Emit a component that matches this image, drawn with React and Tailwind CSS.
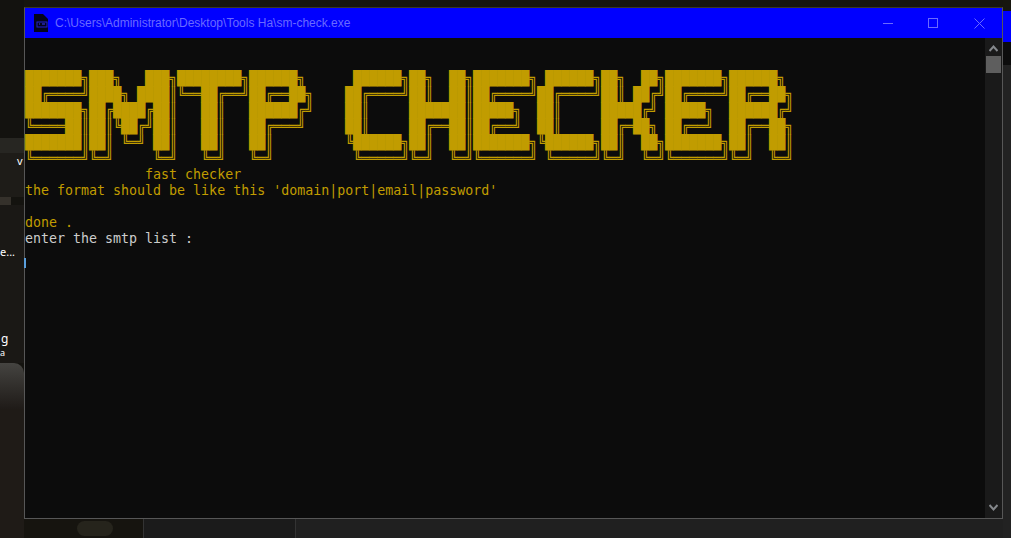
import React from 'react';

const BANNER = [
  '███████╗███╗   ███╗████████╗██████╗      ██████╗██╗  ██╗███████╗ ██████╗██╗  ██╗███████╗██████╗ ',
  '██╔════╝████╗ ████║╚══██╔══╝██╔══██╗    ██╔════╝██║  ██║██╔════╝██╔════╝██║ ██╔╝██╔════╝██╔══██╗',
  '███████╗██╔████╔██║   ██║   ██████╔╝    ██║     ███████║█████╗  ██║     █████╔╝ █████╗  ██████╔╝',
  '╚════██║██║╚██╔╝██║   ██║   ██╔═══╝     ██║     ██╔══██║██╔══╝  ██║     ██╔═██╗ ██╔══╝  ██╔══██╗',
  '███████║██║ ╚═╝ ██║   ██║   ██║         ╚██████╗██║  ██║███████╗╚██████╗██║  ██╗███████╗██║  ██║',
  '╚══════╝╚═╝     ╚═╝   ╚═╝   ╚═╝          ╚═════╝╚═╝  ╚═╝╚══════╝ ╚═════╝╚═╝  ╚═╝╚══════╝╚═╝  ╚═╝',
];

function ExeIcon() {
  return (
    <svg width="16" height="18" viewBox="0 0 16 18" className="shrink-0">
      <path d="M1 0h9l5 5v13H1z" fill="#04041c" />
      <rect x="4" y="8" width="10" height="5" fill="none" stroke="#2222cc" strokeWidth="1" />
      <path d="M6 10h1M9 10h3" stroke="#3a3aff" strokeWidth="1" />
    </svg>
  );
}

function Chevron({ down }) {
  return (
    <svg width="9" height="7" viewBox="0 0 9 7" className={down ? 'rotate-180' : ''}>
      <path d="M0.5 6L4.5 1.5L8.5 6" fill="none" stroke="#85888c" strokeWidth="2" />
    </svg>
  );
}

export default function App() {
  return (
    <div className="flex w-[1011px] h-[538px] overflow-hidden bg-[#14130f]">
      {/* desktop behind the console, left edge */}
      <div className="relative w-[24px] shrink-0 flex flex-col overflow-hidden">
        <div className="h-[138px] bg-[#13120f]" />
        <div className="h-[15px] bg-[#272622]" />
        <div className="h-[44px] bg-[#1e1c18]" />
        <div className="h-[8px] w-[11px] bg-[#35312b]" />
        <div className="h-[158px] bg-[#1a1815]" />
        <div className="h-[46px] rounded-tr-[10px] bg-linear-to-b from-[#454441] to-[#1f1b18]" />
        <div className="flex-1 bg-[#1f1b17]" />
        <span className="absolute left-[17px] top-[155px] text-[11px] leading-3 text-white font-['Noto_Sans',sans-serif]">v</span>
        <span className="absolute left-0 top-[246px] text-[11px] leading-3 text-white font-['Noto_Sans',sans-serif]">e...</span>
        <span className="absolute left-[1px] top-[333px] text-[12px] leading-3 text-white font-['Noto_Sans',sans-serif]">g</span>
        <span className="absolute left-0 top-[347px] text-[9px] leading-3 text-white font-['Noto_Sans',sans-serif]">a</span>
      </div>

      <div className="w-[979px] shrink-0 flex flex-col">
        <div className="h-[7px] bg-[#16150f]" />

        {/* console window */}
        <div className="relative h-[512px] flex flex-col border border-[#575757] border-t-[#3d3a20]">
          <div className="h-[30px] shrink-0 flex items-center bg-[#0000ff] pl-[8px]">
            <ExeIcon />
            <span className="ml-[6px] text-[12px] text-[#6a6aff] font-['Liberation_Sans',sans-serif]">C:\Users\Administrator\Desktop\Tools Ha\sm-check.exe</span>
            <div className="ml-auto flex items-center">
              <div className="w-[10px] h-px bg-[#6a6aff]" />
              <div className="ml-[35px] w-[10px] h-[10px] border border-[#6a6aff]" />
              <svg width="11" height="11" viewBox="0 0 11 11" className="ml-[36px] mr-[17px]">
                <path d="M0.5 0.5L10.5 10.5M10.5 0.5L0.5 10.5" stroke="#6a6aff" strokeWidth="1" />
              </svg>
            </div>
          </div>

          <div className="flex-1 flex min-h-0 bg-[#0c0c0c]">
            <div className="flex-1 pt-[32px] text-[#c19c00] font-['DejaVu_Sans_Mono',monospace] text-[13.75px] tracking-[-0.278px] leading-4">
              <pre className="font-[inherit] leading-4 whitespace-pre">{BANNER.join('\n')}</pre>
              <pre className="mt-px font-[inherit] text-[13.3px] tracking-normal leading-4 whitespace-pre">{'               fast checker\nthe format should be like this \'domain|port|email|password\'\n\ndone .\n'}<span className="text-[#cccccc]">enter the smtp list :</span></pre>
            </div>
            <div className="w-[17px] shrink-0 flex flex-col items-center bg-[#1a1a1a] pt-[7px] pb-[7px]">
              <Chevron />
              <div className="mt-[4px] w-[15px] h-[17px] bg-[#5e5e5e]" />
              <div className="flex-1" />
              <Chevron down />
            </div>
          </div>

          {/* text cursor */}
          <div className="absolute -left-px top-[250px] w-[2px] h-[10px] bg-[#5a9fdc]" />
        </div>

        <div className="flex-1 flex">
          <div className="w-[119px] bg-[#16140f] flex items-center pl-[53px]">
            <div className="w-[36px] h-[15px] rounded-full bg-[#26241c]" />
          </div>
          <div className="w-[152px] bg-[#1b1b1b] border-l border-[#333333]" />
          <div className="flex-1 bg-[#202020] border-l border-[#333333]" />
        </div>
      </div>

      {/* window behind, right edge */}
      <div className="flex-1 flex flex-col">
        <div className="h-[11px] bg-[#17160f]" />
        <div className="h-[31px] bg-[#0000ff]" />
        <div className="h-[23px] bg-[#0c0c0c]" />
        <div className="flex-1 bg-[#222222]" />
      </div>
    </div>
  );
}
